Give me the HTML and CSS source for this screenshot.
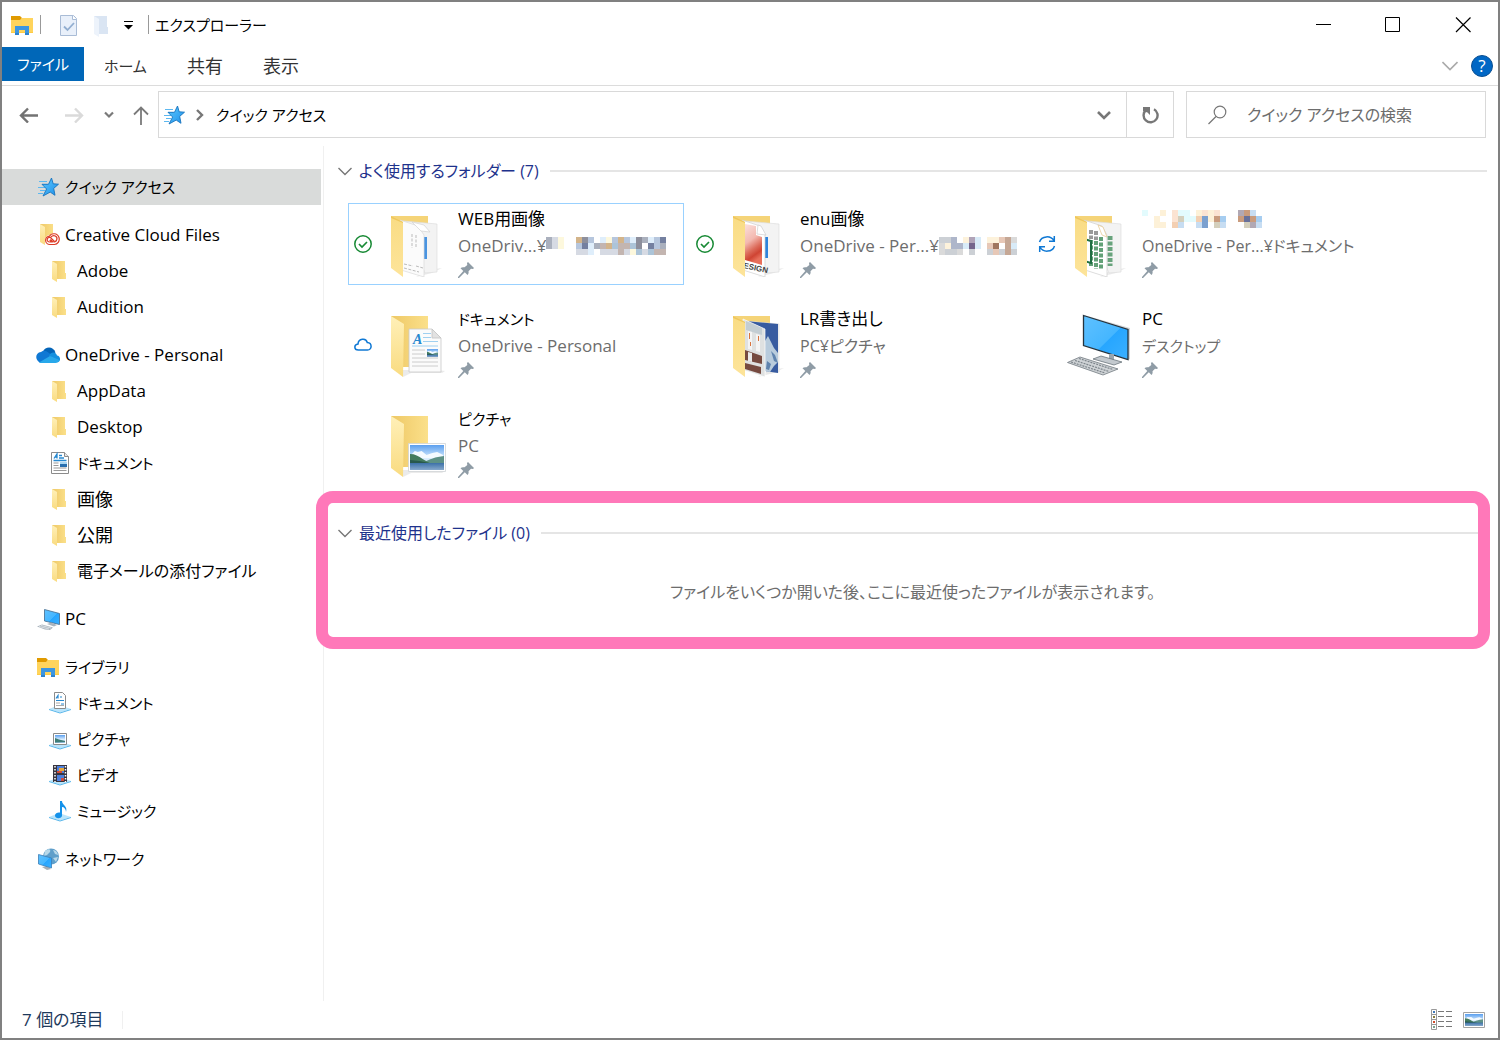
FILE: index.html
```html
<!DOCTYPE html>
<html lang="ja">
<head>
<meta charset="utf-8">
<title>エクスプローラー</title>
<meta name="viewport" content="width=device-width, initial-scale=1">
<link rel="stylesheet" href="styles.css">
</head>
<body>
<svg class="sprite" aria-hidden="true">
  <defs>
    <linearGradient id="g-back" x1="0" y1="0" x2="1" y2="0"><stop offset="0" stop-color="#eec866"/><stop offset="1" stop-color="#fbe08a"/></linearGradient>
    <linearGradient id="g-flap" x1="0" y1="0" x2="0" y2="1"><stop offset="0" stop-color="#fff0b8"/><stop offset="1" stop-color="#f9db80"/></linearGradient>
    <linearGradient id="g-open" x1="0" y1="0" x2="0" y2="1"><stop offset="0" stop-color="#f9dc84"/><stop offset="1" stop-color="#fde49a"/></linearGradient>
    <linearGradient id="g-star" x1="0" y1="0" x2="1" y2="1"><stop offset="0" stop-color="#5cc8ff"/><stop offset="1" stop-color="#1d8fe8"/></linearGradient>
    <linearGradient id="g-screen" x1="0" y1="0" x2="1" y2="1"><stop offset="0" stop-color="#5fc1ff"/><stop offset=".55" stop-color="#45b6ff"/><stop offset=".56" stop-color="#27a6ff"/><stop offset="1" stop-color="#3bb0ff"/></linearGradient>
    <linearGradient id="g-sky" x1="0" y1="0" x2="0" y2="1"><stop offset="0" stop-color="#5b9fee"/><stop offset=".55" stop-color="#dcefff"/><stop offset="1" stop-color="#8fb8dc"/></linearGradient>
    <linearGradient id="g-red" x1="0" y1="0" x2=".3" y2="1"><stop offset="0" stop-color="#fbe0dc"/><stop offset=".45" stop-color="#f3b9b0"/><stop offset=".7" stop-color="#dc6a59"/><stop offset=".85" stop-color="#cf4433"/><stop offset="1" stop-color="#e8705c"/></linearGradient>
    <linearGradient id="g-lake" x1="0" y1="0" x2="0" y2="1"><stop offset="0" stop-color="#3c70a8"/><stop offset="1" stop-color="#86a9cc"/></linearGradient>
    <symbol id="i-star" viewBox="0 0 24 24">
      <path fill="#5db8f0" d="M3 6h8v1H3zM6 9h5v1H6zM2 12h7v1H2zM4 15h5v1H4zM2 18h5v1H2z"/>
      <path d="M15.500 3l1.700 5.800 5.300.4-4.800 4.200 1.300 6.900-4.800-3.200L7 21l3.600-7L6 9.300h6.500z" fill="url(#g-star)" stroke="#1673bd" stroke-width=".9"/>
    </symbol>
    <symbol id="i-folder" viewBox="0 -1 24 24">
      <path fill="url(#g-back)" d="M4 1h13v12h1v6H4z"/><path fill="url(#g-flap)" d="M4 1l5 3v18l-5-3z"/>
    </symbol>
    <symbol id="i-cc" viewBox="0 0 24 24">
      <path fill="url(#g-back)" d="M4 1h13v12h1v6H4z"/><path fill="url(#g-flap)" d="M4 1l5 3v18l-5-3z"/>
      <path fill="#fff" d="M14 22a5 5 0 010-10c1-2 8-3 9.500 2 1.500 4-1 8-4.500 8z"/>
      <g fill="none" stroke="#dc3b26" stroke-width="1.200"><path d="M14 21.500a4.200 4.200 0 01-.4-8.400C15 10 21.500 9.500 23 14.500c1 3.800-1.500 7-4.500 7z"/><path d="M18.500 18.500l-4-4c-4-1-4.500 4.500-.8 4.500h2l-2-2"/><path d="M14.800 14.200c3-3.500 7-.6 6 2.300-.6 2.400-2.500 2.600-4.300 2l-2-2"/></g>
    </symbol>
    <symbol id="i-onedrive" viewBox="0 0 24 24">
      <path fill="#0364b8" d="M7 8.500C9 3.500 17 2.500 19.500 9.500L12 14z"/>
      <path fill="#0f78d4" d="M4 19.500C-1.500 17-.8 9.500 5 9c3-2.500 6-1 8 1l4 3-9 6z"/>
      <path fill="#1490df" d="M13 12.500c2-4 7-4 8 0 3.500.5 4 5 1.500 6.500z"/>
      <path fill="#28a8ea" d="M3 19.500l11-6.500 9.500 4c-.5 2-2 3-4 3H5c-1 0-1.500 0-2-.5z"/>
    </symbol>
    <symbol id="i-doc" viewBox="0 0 24 24">
      <path fill="#fff" stroke="#8b8b8b" d="M3.500 1.500h13l4 4v17h-17z"/><path fill="#e6e6e6" stroke="#8b8b8b" d="M16.500 1.500v4h4"/>
      <path fill="none" stroke="#2688d0" stroke-width="1.300" d="M6 7.500L9 3v4.500M7 6h2M11 4.500h3M11 7h5M5.500 9.500h13"/>
      <path stroke="#999" d="M5.500 12h5M5.500 14.500h5M5.500 17h13M5.500 19.500h13"/><path fill="#286eae" d="M12 11h7v5h-7z"/><path fill="#a9d6f2" d="M12 11h7v2h-7z"/>
    </symbol>
    <symbol id="i-monitor" viewBox="0 0 24 24">
      <path fill="url(#g-screen)" stroke="#43688a" stroke-width=".8" d="M8.500 2.500l15 4v11l-15-3.500z"/>
      <path fill="#aab4bd" d="M11 17l4-1.500 6 2.500-3 1.500zM1 19.500l5-2 11 3-3 2.500-5-.5z"/><path stroke="#edf1f4" stroke-width=".7" fill="none" d="M3 19.500l10 2.500M5 18.500l10 2.500"/>
    </symbol>
    <symbol id="i-library" viewBox="0 0 24 24">
      <path fill="#e09a00" d="M1 3h9l2 2-2 3H1z"/><path fill="#ffd45c" d="M1 7h9l2-2h11v15H1z"/>
      <path fill="#ffcb43" d="M1 19h22v1H1z"/><path fill="#3d96e0" d="M5 13h14v9h-4v-5H9v5H5z"/><path fill="#2c83d0" d="M5 20h4v2H5zM15 20h4v2h-4z"/>
    </symbol>
    <symbol id="i-base" viewBox="0 0 24 24"><path fill="#b9e4fb" d="M1 18l10-4 12 4-11 3.500z"/><path fill="#55b5ea" d="M1 18l11 3.500L23 18v1l-11 3.500L1 19z"/></symbol>
    <symbol id="i-lib-doc" viewBox="0 0 24 24">
      <use href="#i-base"/><path fill="#fff" stroke="#8b8b8b" d="M6.500 1.500h8l3 3v13h-11z"/><path fill="none" stroke="#2688d0" stroke-width="1.200" d="M8 7.500l2-3v3M12 6h2M8 9.500h8M13 13h3"/><path stroke="#aaa" d="M8 12h4M8 14.500h8"/>
    </symbol>
    <symbol id="i-lib-pic" viewBox="0 0 24 24">
      <use href="#i-base"/><path fill="#fff" stroke="#8b8b8b" d="M5.500 6.500h13v11h-13z"/><path fill="url(#g-sky)" d="M7 8h10v8H7z"/><path fill="#3e7e78" d="M7 11l4 1.500 6 1.500v1l-10 .5z"/>
    </symbol>
    <symbol id="i-lib-video" viewBox="0 0 24 24">
      <use href="#i-base"/><path fill="#37353f" d="M5 2h14v17H5z"/><path fill="#4d7fdc" d="M9 3h7v7H9zM9 12h7v6H9z"/><path fill="#e7a73a" d="M11 5h5v3h-5z"/><path fill="#cf4b38" d="M9 8h5v2H9zM13 15h3v3h-3z"/><path stroke="#fff" stroke-width="1.500" stroke-dasharray="1.500 1.500" d="M7 3v16M17.500 3v16"/>
    </symbol>
    <symbol id="i-lib-music" viewBox="0 0 24 24">
      <use href="#i-base"/><path fill="#1592ea" d="M12 2h2c0 4 6 5 4 11 0-3-2-5-4-5v9c-1 3-7 3-7-.5 0-2.500 3-3.500 5-3z"/>
    </symbol>
    <symbol id="i-network" viewBox="0 0 24 24">
      <circle cx="15" cy="9.500" r="8" fill="#5f9fca"/><path fill="#b7d8e9" d="M9 4c4-3 6-2 5 1l-3 3-3 1zM17 3c3 0 5 3 5 5l-3-1zM17 11l5-1-2 5z"/>
      <path fill="#a7afb6" d="M6 20l5-1 4 3-4 1z"/><path fill="url(#g-screen)" stroke="#3b7fb8" stroke-width=".8" d="M2.500 7.500l13 3.500v10l-13-4z"/>
    </symbol>
    <symbol id="i-pin" viewBox="0 0 16 16"><path fill="#8f9ca6" d="M10 0l6 6-1 1-2-.3-2.500 2.600c.4 1.500 0 2.700-1 3.700L6.800 10.300 1 16H0v-1l5.300-6-2.800-2.700c1-1.100 2.300-1.400 4-1L9.300 3 9 1z"/></symbol>
    <symbol id="i-ok" viewBox="0 0 18 18"><circle cx="9" cy="9" r="8.200" fill="#fff" stroke="#188a35" stroke-width="1.500"/><path fill="none" stroke="#188a35" stroke-width="1.700" d="M5 9l3 3 5-5"/></symbol>
    <symbol id="i-sync" viewBox="0 0 18 18"><g fill="none" stroke="#0f78d4" stroke-width="1.500"><path d="M1.500 7C3.500.5 13 .2 16 6M16.300 1v5.300H11M16.500 11c-2 6.500-11.500 6.800-14.500 1M1.700 17v-5.300H7"/></g></symbol>
    <symbol id="i-cloud" viewBox="0 0 18 18"><path fill="#fff" stroke="#0f78d4" stroke-width="1.500" d="M4.300 15C-.2 15-.3 9.500 4 9c.3-5.500 8-6.500 9.300-1.500 5 .3 5 7.500.2 7.500z"/></symbol>
    <symbol id="i-scene" viewBox="0 0 35 25" preserveAspectRatio="none">
      <path fill="url(#g-sky)" d="M0 0h35v25H0z"/><path fill="#f4faff" d="M1 10l4-4 3 1 4-1 5 4 6-2 5-1 6 3v3H1z"/><path fill="#5d9186" d="M14 18c6-4 12-6 21-7v8H14z"/><path fill="#447b5f" d="M0 9c5 0 9 2 13 5l9 5H0z"/><path fill="#28594d" d="M0 15l10 1 14 3H0z"/><path fill="url(#g-lake)" d="M0 18h35v7H0z"/>
    </symbol>
    <symbol id="f-open" viewBox="0 0 64 66">
      <path fill="#ddd" opacity=".6" d="M44 59l15-2-10 5-16 4z"/><path fill="#f5d478" d="M8 5h37v14H8z"/><path fill="#f3f3f3" stroke="#dedede" stroke-width=".7" d="M20 10l34 3v48l-12 1z"/>
    </symbol>
    <symbol id="f-flap" viewBox="0 0 64 66"><path fill="url(#g-open)" d="M8 5l12 6v55L8 57z"/><path fill="#efc75d" d="M8 5l12 6v1L8 7z"/></symbol>
    <symbol id="f-closed" viewBox="0 0 64 66"><path fill="#ddd" opacity=".6" d="M20 66l8-4h31l3-2-8-1H20z"/><path fill="url(#g-back)" d="M8 5h37v51H8z"/><path fill="url(#g-flap)" d="M8 5l13 8-1 53L8 57z"/></symbol>
  </defs>
</svg>

<div class="window">
  <header class="titlebar">
    <div class="quickbar">
      <svg class="ico"><use href="#i-library"/></svg>
      <span class="bar"></span>
      <button class="tool props" aria-label="プロパティ"><svg class="ico" viewBox="0 0 24 24"><path fill="#e9f0fa" stroke="#a9bcd6" d="M3.500 2.500h13l3 3v17h-16z"/><path fill="#fff" stroke="#a9bcd6" d="M15.500 2.500v4h4"/><path fill="none" stroke="#92aed0" stroke-width="1.800" d="M7 13.500l3.500 3.500L17 10"/></svg></button>
      <button class="tool" aria-label="新しいフォルダー"><svg class="ico" viewBox="0 0 24 24"><path fill="#dae5f3" d="M5 3h13v11h1v7H5z"/><path fill="#edf3fb" d="M5 3l5 3v18l-5-3z"/></svg></button>
      <button class="tool more" aria-label="クイック アクセス ツール バーのユーザー設定"><svg width="9" height="10" viewBox="0 0 9 10"><path d="M0 1h9v1H0zM0 5h9L4.500 9.500z"/></svg></button>
      <span class="bar"></span>
      <h1 class="title kana">エクスプローラー</h1>
    </div>
    <div class="controls">
      <button aria-label="最小化"><svg width="16" height="16" viewBox="0 0 16 16"><path d="M1 7h15v1H1z"/></svg></button>
      <button aria-label="最大化"><svg width="16" height="16" viewBox="0 0 16 16"><path fill="none" stroke="#000" d="M.5.5h14v14H.5z"/></svg></button>
      <button aria-label="閉じる"><svg width="16" height="16" viewBox="0 0 16 16"><path fill="none" stroke="#000" stroke-width="1.200" d="M1 .5L15.500 15M15.500.5L1 15"/></svg></button>
    </div>
  </header>

  <div class="ribbon">
    <div class="tabs">
      <button class="tab file kana">ファイル</button>
      <button class="tab kana">ホーム</button>
      <button class="tab kanji">共有</button>
      <button class="tab kanji">表示</button>
    </div>
    <div class="ribbon-end">
      <button class="tool" aria-label="リボンの展開"><svg width="16" height="10" viewBox="0 0 16 10"><path fill="none" stroke="#aaa" stroke-width="1.600" d="M.5 1L8 8.500 15.500 1"/></svg></button>
      <button class="help" aria-label="ヘルプ">?</button>
    </div>
  </div>

  <div class="navbar">
    <div class="arrows">
      <button class="tool back" aria-label="戻る"><svg width="20" height="16" viewBox="0 0 20 16"><path fill="none" stroke="#737373" stroke-width="2.400" d="M20 8.500H3M10 1.500l-7 7 7 7"/></svg></button>
      <button class="tool" aria-label="進む"><svg width="20" height="16" viewBox="0 0 20 16"><path fill="none" stroke="#dadada" stroke-width="2.400" d="M0 8.500h17M10 1.500l7 7-7 7"/></svg></button>
      <button class="tool recent" aria-label="最近表示した場所"><svg width="10" height="8" viewBox="0 0 10 8"><path fill="none" stroke="#7a7a7a" stroke-width="2.200" d="M1 1.500L5 5.500 9 1.500"/></svg></button>
      <button class="tool" aria-label="上へ"><svg width="16" height="20" viewBox="0 0 16 20"><path fill="none" stroke="#7a7a7a" stroke-width="1.800" d="M8 20V3M1 9.500L8 2.500l7 7"/></svg></button>
    </div>
    <div class="address">
      <svg class="ico"><use href="#i-star"/></svg>
      <svg class="crumb-sep" width="8" height="12" viewBox="0 0 8 12"><path fill="none" stroke="#777" stroke-width="2.400" d="M1 1l5 5-5 5"/></svg>
      <button class="crumb kana">クイック アクセス</button>
      <button class="tool drop" aria-label="以前の場所"><svg width="14" height="10" viewBox="0 0 14 10"><path fill="none" stroke="#777" stroke-width="2.600" d="M1 2l6 6 6-6"/></svg></button>
      <button class="tool refresh" aria-label="最新の情報に更新"><svg width="18" height="18" viewBox="0 0 18 18"><path fill="none" stroke="#777" stroke-width="2.400" d="M13 3.200A7 7 0 1 1 5 4"/><path fill="#777" d="M2 1h7v8L6.500 6.500 2 5z"/></svg></button>
    </div>
    <form class="search">
      <svg width="20" height="20" viewBox="0 0 20 20"><g fill="none" stroke="#777" stroke-width="1.200"><circle cx="13" cy="7" r="5.800"/><path d="M9 11.500L1.500 19"/></g></svg>
      <input class="mixed" type="search" aria-label="クイック アクセスの検索" placeholder="クイック アクセスの検索">
    </form>
  </div>

  <div class="body">
    <nav class="tree" aria-label="ナビゲーション ウィンドウ">
      <ul>
        <li><a class="node kana selected" href="#quick"><svg class="ico"><use href="#i-star"/></svg>クイック アクセス</a></li>
      </ul>
      <ul>
        <li><a class="node" href="#cc"><svg class="ico"><use href="#i-cc"/></svg>Creative Cloud Files</a></li>
        <li><a class="node child" href="#adobe"><svg class="ico"><use href="#i-folder"/></svg>Adobe</a></li>
        <li><a class="node child" href="#audition"><svg class="ico"><use href="#i-folder"/></svg>Audition</a></li>
      </ul>
      <ul>
        <li><a class="node" href="#onedrive"><svg class="ico"><use href="#i-onedrive"/></svg>OneDrive - Personal</a></li>
        <li><a class="node child" href="#appdata"><svg class="ico"><use href="#i-folder"/></svg>AppData</a></li>
        <li><a class="node child" href="#desktop"><svg class="ico"><use href="#i-folder"/></svg>Desktop</a></li>
        <li><a class="node child kana" href="#documents"><svg class="ico"><use href="#i-doc"/></svg>ドキュメント</a></li>
        <li><a class="node child kanji" href="#images"><svg class="ico"><use href="#i-folder"/></svg>画像</a></li>
        <li><a class="node child kanji" href="#public"><svg class="ico"><use href="#i-folder"/></svg>公開</a></li>
        <li><a class="node child mixed" href="#attachments"><svg class="ico"><use href="#i-folder"/></svg>電子メールの添付ファイル</a></li>
      </ul>
      <ul>
        <li><a class="node" href="#pc"><svg class="ico"><use href="#i-monitor"/></svg>PC</a></li>
      </ul>
      <ul>
        <li><a class="node kana" href="#library"><svg class="ico"><use href="#i-library"/></svg>ライブラリ</a></li>
        <li><a class="node child kana" href="#lib-documents"><svg class="ico"><use href="#i-lib-doc"/></svg>ドキュメント</a></li>
        <li><a class="node child kana" href="#lib-pictures"><svg class="ico"><use href="#i-lib-pic"/></svg>ピクチャ</a></li>
        <li><a class="node child kana" href="#lib-videos"><svg class="ico"><use href="#i-lib-video"/></svg>ビデオ</a></li>
        <li><a class="node child kana" href="#lib-music"><svg class="ico"><use href="#i-lib-music"/></svg>ミュージック</a></li>
      </ul>
      <ul>
        <li><a class="node kana" href="#network"><svg class="ico"><use href="#i-network"/></svg>ネットワーク</a></li>
      </ul>
    </nav>

    <main class="content">
      <section class="group">
        <h2 class="group-head mixed"><button><svg width="14" height="9" viewBox="0 0 14 9"><path fill="none" stroke="#777" stroke-width="1.400" d="M.5 1L7 7.500 13.500 1"/></svg>よく使用するフォルダー (7)</button></h2>
        <ul class="tiles">
          <li><a class="tile selected" href="#web">
            <svg class="state"><use href="#i-ok"/></svg>
            <svg class="thumb" viewBox="0 0 64 66"><use href="#f-open"/><path fill="#4a94e0" d="M40 26h4v22h-4z"/><path fill="#fbfbfb" stroke="#dadada" stroke-width=".7" d="M17 9l18 6 6 9v42l-23-7z"/><path fill="#fff" stroke="#d2d2d2" stroke-width=".7" d="M29 11l12 3 6 7-9-1z"/><path stroke="#bbb" stroke-dasharray="3 1.500" d="M29 23v14M33 24v12M21 53l9 2M21 57l15 4M33 55l7 2" fill="none"/><use href="#f-flap"/></svg>
            <span class="label"><span class="name">WEB用画像</span>
              <span class="path">OneDriv...¥<svg class="mosaic" width="126" height="18" viewBox="0 0 21 3" shape-rendering="crispEdges"><path stroke="#aab0bd" d="M0 .5h1M0 1.500h1M8 1.500h1M16 .5h1M19 1.500h1"/><path stroke="#d6dae3" d="M1 .5h1M1 1.500h1M5 2.500h2M9 2.500h3M13 2.500h1M16 2.500h1"/><path stroke="#fdf8dd" d="M2 .5h1M2 1.500h1M10 .5h1M14 2.500h1"/><path stroke="#d3b48a" d="M5 .5h1M10 1.500h1M12 .5h1"/><path stroke="#8d8f9c" d="M6 .5h1M15 .5h1M15 1.500h1"/><path stroke="#7480a0" d="M6 1.500h1M19 .5h1M17 1.500h1"/><path stroke="#b6c6dd" d="M5 1.500h1M7 .5h1M11 .5h1M13 .5h1M18 .5h1M18 1.500h1"/><path stroke="#dfeefb" d="M7 1.500h1M9 .5h1M14 .5h1M7 2.500h1M17 .5h1"/><path stroke="#c3b5b0" d="M12 1.500h1M13 1.500h1M9 1.500h1M12 2.500h1M18 2.500h1M19 2.500h1"/><path stroke="#acc4d8" d="M11 1.500h1M14 1.500h1M15 2.500h1M17 2.500h1"/></svg></span>
              <svg class="pin"><use href="#i-pin"/></svg></span>
          </a></li>
          <li><a class="tile" href="#enu">
            <svg class="state"><use href="#i-ok"/></svg>
            <svg class="thumb" viewBox="0 0 64 66"><use href="#f-open"/><path fill="#2e84dc" d="M40 26h3v21h-3z"/><path fill="#fff" stroke="#d0d0d0" stroke-width=".7" d="M17 9l18 6 5 8v43l-22-7z"/><path fill="url(#g-red)" d="M20 13l11 2v9l6 2v28l-17-5z"/><path fill="#fff" stroke="#cfcfcf" stroke-width=".7" d="M33 14l3 1 5 9-9-1z"/><text x="18" y="57" transform="rotate(12 18 57)" class="design">ESIGN</text><use href="#f-flap"/></svg>
            <span class="label"><span class="name">enu画像</span>
              <span class="path">OneDrive - Per...¥<svg class="mosaic" width="78" height="18" viewBox="0 0 13 3" shape-rendering="crispEdges"><path stroke="#ccd0d5" d="M0 0.500h2M1 2.500h2M5 2.500h1M8 2.500h1M10 2.500h1M12 2.500h1"/><path stroke="#dadada" d="M0 1.500h1M0 2.500h1M3 2.500h1M12 .5h1M9 2.500h1"/><path stroke="#fdf2db" d="M1 1.500h1M4 .5h1M8 .5h1M9 .5h1"/><path stroke="#aeb6ca" d="M2 .5h1M2 1.500h1M3 1.500h1"/><path stroke="#74658c" d="M5 1.500h1"/><path stroke="#b0a3b8" d="M5 .5h1"/><path stroke="#d8ebf8" d="M6 .5h1M6 1.500h1M4 1.500h1M12 1.500h1"/><path stroke="#e7c8b7" d="M8 1.500h1M10 .5h1M9 2.500h1"/><path stroke="#a0765f" d="M9 1.500h1"/><path stroke="#c5a795" d="M11 .5h1M11 1.500h1M11 2.500h1"/></svg></span>
              <svg class="pin"><use href="#i-pin"/></svg></span>
          </a></li>
          <li><a class="tile" href="#sheets">
            <svg class="state"><use href="#i-sync"/></svg>
            <svg class="thumb" viewBox="0 0 64 66"><use href="#f-open"/><path fill="none" stroke="#68a37c" stroke-width="5" stroke-dasharray="4 1.500" d="M43 25v30"/><path fill="#fff" stroke="#cfcfcf" stroke-width=".7" d="M17 9l18 6 5 9v42l-22-7z"/><path fill="#fff" stroke="#e4c58d" stroke-width=".7" d="M31 14l5 2 4 10-5-2z"/><g fill="none" stroke="#63a178" stroke-width="4" stroke-dasharray="4 1.500"><path stroke="#999" d="M24 19v9M29 20v9"/><path d="M24 29v27M29 30v28M34 26v33"/></g><path fill="#fff" stroke="#1f6f42" stroke-width="2" d="M17 28l7 2v22l-7-2z"/><use href="#f-flap"/></svg>
            <span class="label"><span class="name"><svg class="mosaic" width="120" height="18" viewBox="0 0 20 3" role="img" aria-label="非表示" shape-rendering="crispEdges"><path stroke="#e3fbfd" d="M0 .5h1M5 .5h1M6 .5h2M7 1.500h2"/><path stroke="#fdf1d8" d="M2 1.500h1M3 .5h1M3 2.500h1M9 .5h1M11 .5h1M2 2.500h1M11 1.500h1"/><path stroke="#fbe3d2" d="M5 1.500h1M5 .5h1M10 .5h1M12 .5h1"/><path stroke="#d4cfbc" d="M6 1.500h1M12 2.500h1M17 2.500h1"/><path stroke="#c7ddf2" d="M6 2.500h1M9 2.500h1M13 2.500h1M18 .5h1M19 2.500h1"/><path stroke="#7ba0cf" d="M10 1.500h1M10 2.500h1"/><path stroke="#c99b7d" d="M12 1.500h1M17 .5h1M18 1.500h1M16 1.500h1"/><path stroke="#a6cdf0" d="M13 1.500h1M19 1.500h1"/><path stroke="#68709a" d="M17 1.500h1"/><path stroke="#b1a8b4" d="M18 2.500h1M16 .5h1"/><path stroke="#f3cfb2" d="M9 1.500h1M5 2.500h1"/></svg></span>
              <span class="path mixed">OneDrive - Per...¥ドキュメント</span>
              <svg class="pin"><use href="#i-pin"/></svg></span>
          </a></li>
          <li><a class="tile" href="#docs">
            <svg class="state"><use href="#i-cloud"/></svg>
            <svg class="thumb" viewBox="0 0 64 66"><use href="#f-closed"/><path fill="#fbfbfb" stroke="#c9c9c9" stroke-width=".8" d="M26 18h23l9 9v34H26z"/><path fill="#e2e2e2" stroke="#c4c4c4" stroke-width=".8" d="M49 18v9h9z"/><text x="30" y="33" class="letter">A</text><path stroke="#9fd0f0" d="M40 22.500h8M40 26.500h8M40 30.500h15M29 35h26"/><path stroke="#ccc" d="M29 39h13M29 43h13M29 47h26M29 51h26M29 55h26"/><svg x="44" y="38" width="11" height="8"><use href="#i-scene"/></svg></svg>
            <span class="label"><span class="name kana">ドキュメント</span><span class="path">OneDrive - Personal</span><svg class="pin"><use href="#i-pin"/></svg></span>
          </a></li>
          <li><a class="tile" href="#lr">
            <span class="state"></span>
            <svg class="thumb" viewBox="0 0 64 66"><use href="#f-open"/><path fill="#375ba0" d="M20 10l33 3v49l-13-2z"/><path fill="#b8cbdc" d="M40 30l3-5 3 6 3 6 4 5v9l-4 4-4 6-5-1z"/><path fill="#5f83ae" d="M46 40l4 4 3 8-4-2zM42 50l4 3-2 6-3-1z"/><path fill="#dfe1e1" stroke="#fff" stroke-width=".7" d="M18 8l22 10v48l-22-7z"/><path fill="#c3cdd3" d="M21 10l16 7v7l-16-5z"/><path fill="#f4f4f4" d="M23 20l4 1v18l-4-1zM31 23l4 1v17l-4-1z"/><path fill="#d9743f" d="M24 22h1v6h-1zM33 25h1v5h-1zM25 31h1v4h-1z"/><path fill="#764a40" d="M20 39l17 6v8l-17-4zM20 52l16 4v7l-16-5z"/><path fill="#e9e9e9" d="M23 41l4 1v9l-4-1z"/><use href="#f-flap"/></svg>
            <span class="label"><span class="name">LR書き出し</span><span class="path mixed">PC¥ピクチャ</span><svg class="pin"><use href="#i-pin"/></svg></span>
          </a></li>
          <li><a class="tile" href="#pc-desktop">
            <span class="state"></span>
            <svg class="thumb" viewBox="0 0 64 66"><path fill="#d4d7da" d="M17 4l46 13v31l-2 1z"/><path fill="url(#g-screen)" stroke="#26333d" stroke-width="1.300" d="M16.500 4.500L61 18.500v30L16.500 34.500z"/><path fill="#9aa5ae" d="M42 43h5v6h-5z"/><path fill="#c3c9ce" stroke="#5d6870" stroke-width=".7" d="M26 48l8-3 21 6-8 3z"/><path fill="#cfd3d6" stroke="#717a80" stroke-width=".8" d="M.5 51.500L13 46l38 12-15 6z"/><path fill="none" stroke="#7e868c" stroke-width="1.200" stroke-dasharray="2 1" d="M4 51l34 11M8 49.500l34 11M12 47.500l34 11"/></svg>
            <span class="label"><span class="name">PC</span><span class="path kana">デスクトップ</span><svg class="pin"><use href="#i-pin"/></svg></span>
          </a></li>
          <li><a class="tile" href="#pictures">
            <span class="state"></span>
            <svg class="thumb" viewBox="0 0 64 66"><use href="#f-closed"/><path fill="#fff" stroke="#cfd3d6" stroke-width=".8" d="M25.500 32.500h37v28h-37z"/><svg x="27" y="34" width="34" height="25"><use href="#i-scene"/></svg></svg>
            <span class="label"><span class="name kana">ピクチャ</span><span class="path">PC</span><svg class="pin"><use href="#i-pin"/></svg></span>
          </a></li>
        </ul>
      </section>
      <section class="group recent-files">
        <h2 class="group-head mixed"><button><svg width="14" height="9" viewBox="0 0 14 9"><path fill="none" stroke="#777" stroke-width="1.400" d="M.5 1L7 7.500 13.500 1"/></svg>最近使用したファイル (0)</button></h2>
        <p class="empty mixed">ファイルをいくつか開いた後、ここに最近使ったファイルが表示されます。</p>
      </section>
    </main>
  </div>

  <footer class="status">
    <span class="count">7 個の項目</span>
    <div class="views">
      <button class="tool" aria-label="詳細"><svg width="22" height="22" viewBox="0 0 22 22"><path fill="#fff" stroke="#999" d="M.5.500h5v20h-5zM.5 5.500h5M.5 10.500h5M.5 15.500h5"/><path fill="#3f78b8" d="M2 2h2v2H2z"/><path fill="#8a7a3a" d="M2 7h2v2H2z"/><path fill="#d14a28" d="M2 12h2v2H2z"/><path fill="#7aa08c" d="M2 17h2v2H2z"/><path stroke="#777" d="M7 2.500h6M15 2.500h6M7 7.500h6M15 7.500h6M7 12.500h6M15 12.500h6M7 17.500h6M15 17.500h6"/></svg></button>
      <button class="tool" aria-label="大アイコン"><svg width="22" height="16" viewBox="0 0 22 16"><path fill="#fff" stroke="#a3a3a3" d="M.5.500h21v15H.5z"/><svg x="2" y="2" width="18" height="12"><use href="#i-scene"/></svg></svg></button>
    </div>
  </footer>
</div>
</body>
</html>
```
FILE: styles.css
```css
* { box-sizing: border-box; }

body {
  margin: 0;
  font: 17px/28px "Open Sans", "Noto Sans CJK JP", sans-serif;
  font-feature-settings: "palt";
  color: #000;
  background: #fff;
}

button {
  margin: 0;
  padding: 0;
  border: 0;
  background: none;
  color: inherit;
  font: inherit;
  font-feature-settings: inherit;
  cursor: pointer;
}

svg { display: block; flex: none; }
ul { margin: 0; padding: 0; list-style: none; }
a { color: inherit; text-decoration: none; }

.sprite { position: absolute; width: 0; height: 0; }
.ico { width: 24px; height: 24px; }
.tool { display: flex; align-items: center; justify-content: center; }

.window {
  display: flex;
  flex-direction: column;
  min-height: 100vh;
  border: 2px solid #808080;
}

/* Title bar */
.titlebar { display: flex; justify-content: space-between; height: 45px; }
.quickbar { display: flex; align-items: center; padding-left: 8px; }
.bar { width: 1px; height: 19px; margin: 0 6px; background: #999; }
.quickbar .tool { width: 32px; }
.quickbar .props { margin-left: 6px; }
.quickbar .more { width: 22px; margin-right: 3px; }
.title { margin: 0; font-weight: 400; }
.controls { display: flex; }
.controls button { display: flex; align-items: center; justify-content: center; width: 70px; }

/* Ribbon */
.ribbon {
  display: flex;
  justify-content: space-between;
  height: 39px;
  border-bottom: 1px solid #dcdcdc;
}
.tabs { display: flex; align-items: flex-start; }
.tab { height: 38px; padding: 0 20px; color: #333; }
.tab.file { width: 82px; height: 34px; padding: 0; background: #0067b8; color: #fff; }
.ribbon-end { display: flex; align-items: center; gap: 13px; padding-right: 5px; }
.help {
  width: 22px;
  height: 22px;
  border-radius: 50%;
  border: 1px solid #0a4f92;
  background: #0067c5;
  color: #fff;
  line-height: 20px;
}

/* Navigation bar */
.navbar { display: flex; height: 60px; padding: 5px 12px 8px 16px; }
.arrows { display: flex; align-items: center; width: 140px; gap: 19px; }
.arrows .back { margin-right: 8px; }
.address { display: flex; flex: 1; align-items: center; border: 1px solid #d9d9d9; padding-left: 3px; }
.crumb-sep { margin: 0 12px 0 10px; }
.drop { width: 44px; height: 100%; margin-left: auto; }
.refresh { width: 47px; height: 100%; border-left: 1px solid #d9d9d9; }
.search {
  display: flex;
  align-items: center;
  gap: 20px;
  width: 300px;
  margin-left: 12px;
  padding: 0 20px;
  border: 1px solid #d9d9d9;
}
.search input {
  flex: 1;
  min-width: 0;
  padding: 0;
  border: 0;
  outline: 0;
  background: none;
  font-family: inherit;
  font-feature-settings: inherit;
}
.search input::placeholder { color: #6d6d6d; opacity: 1; }

/* Body */
.body { display: flex; flex: 1; }
.tree {
  display: flex;
  flex-direction: column;
  gap: 12px;
  width: 322px;
  padding: 23px 2px 0 0;
  border-right: 1px solid #f0f0f0;
}
.node { display: flex; align-items: center; gap: 5px; height: 36px; padding-left: 34px; }
.node.child { padding-left: 46px; }
.node.selected { background: #d9dbda; }

.content { flex: 1; min-width: 0; padding: 11px 11px 0 14px; }
.group-head { display: flex; align-items: center; gap: 11px; margin: 0; font-weight: 400; }
.group-head::after { content: ""; flex: 1; height: 2px; background: #e5e5e5; }
.group-head button { display: flex; align-items: center; gap: 7px; color: #1e328c; }

.tiles { display: grid; grid-template-columns: repeat(auto-fill, 336px); gap: 18px 6px; padding: 18px 0 0 10px; }
.tile { display: flex; align-items: center; gap: 11px; height: 82px; padding: 0 5px; border: 1px solid transparent; }
.tile.selected { border-color: #99d1ff; }
.state { flex: none; width: 18px; height: 18px; }
.thumb { width: 64px; height: 66px; }
.label { display: flex; flex-direction: column; height: 78px; white-space: nowrap; }
.name { display: flex; align-items: center; height: 28px; }
.path { display: flex; align-items: center; height: 26px; color: #6d6d6d; }
.pin { width: 16px; height: 16px; margin-top: 3px; }
.letter { font: italic bold 14px "Liberation Serif", serif; fill: #2688d0; }
.design { font: bold 8px "Liberation Sans", sans-serif; fill: #444; }

/* Frame drawn round the recent files group */
.recent-files { position: relative; margin-top: 34px; }
.recent-files::after {
  content: "";
  position: absolute;
  inset: -28px -3px -28px -22px;
  border: 12px solid #ff78b9;
  border-radius: 17px;
  pointer-events: none;
}
.empty { margin: 0; padding: 31px 0 15px; color: #6d6d6d; text-align: center; }

/* Status bar */
.status { display: flex; align-items: center; justify-content: space-between; height: 37px; padding: 0 13px 0 20px; }
.count { padding-right: 18px; border-right: 1px solid #f0f0f0; color: #1e395b; line-height: 18px; }
.views { display: flex; align-items: center; gap: 10px; }

/* Text sizes by script */
.kana { font-size: 15px; }
.mixed { font-size: 16px; }
.kanji { font-size: 18px; }
```
